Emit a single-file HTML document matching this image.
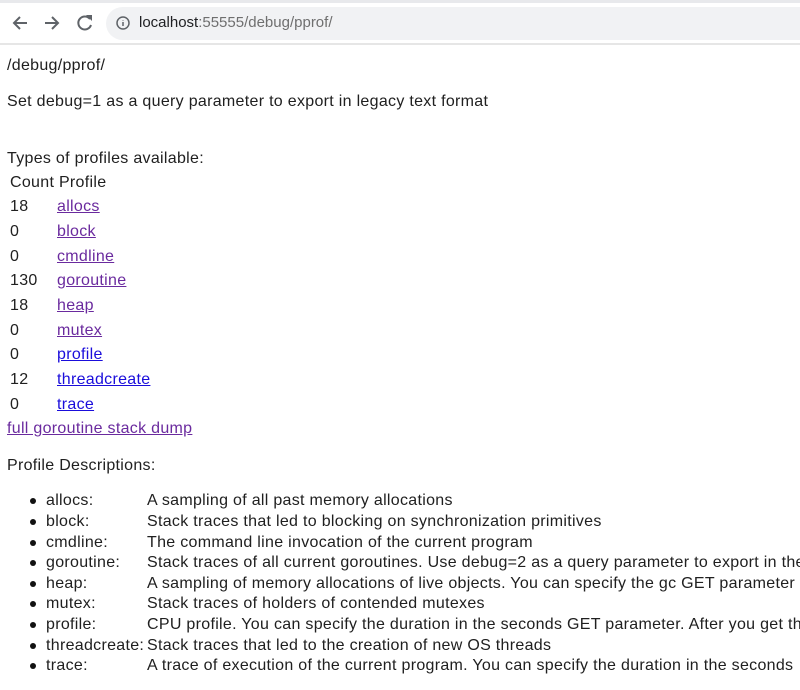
<!DOCTYPE html>
<html><head><meta charset="utf-8"><style>
html,body{margin:0;width:800px;height:690px;overflow:hidden}
body{background:#fff;font-family:"Liberation Sans",sans-serif;font-size:16px;letter-spacing:0.3px;color:#202020}
#w{position:relative;width:800px;height:690px;overflow:hidden}
.a{position:absolute;white-space:nowrap;line-height:20px;height:20px}
a{text-decoration:underline}
.v{color:#6a2a9e}.b{color:#1a0ddb}
.bul{position:absolute;left:30px;width:6px;height:6px;border-radius:50%;background:#111}
</style></head><body><div id="w">
<div style="position:absolute;left:0;top:0;width:800px;height:3px;background:#e8e9ec"></div>
<div style="position:absolute;left:106px;top:7px;width:720px;height:33px;border-radius:17px;background:#f1f2f4"></div>
<div style="position:absolute;left:0;top:43px;width:800px;height:2px;background:#e6e6e6"></div>
<svg style="position:absolute;left:0;top:0" width="110" height="45" viewBox="0 0 110 45">
<g fill="none" stroke="#5f6368" stroke-width="2">
<path d="M27 23H14M20 17l-6 6 6 6"/>
<path d="M45 23h13M52 17l6 6-6 6"/>
<path d="M90 19a6.5 6.5 0 1 0 1 6"/>
</g>
<path d="M86 15h6v6z" fill="#5f6368"/>
</svg>
<svg style="position:absolute;left:115px;top:15px" width="16" height="16" viewBox="0 0 16 16"><circle cx="8" cy="8" r="6" fill="none" stroke="#5f6368" stroke-width="1.5"/><path d="M8 7v4M8 5v.5" stroke="#5f6368" stroke-width="1.5"/></svg>
<div class="a" style="left:139px;top:13px;font-size:15px;letter-spacing:0;color:#202124">localhost<span style="color:#6f6f6f">:55555/debug/pprof/</span></div>
<div class="a" style="left:7px;top:56px">/debug/pprof/</div>
<div class="a" style="left:7px;top:92px">Set debug=1 as a query parameter to export in legacy text format</div>
<div class="a" style="left:7px;top:149px">Types of profiles available:</div>
<div class="a" style="left:10px;top:173px">Count Profile</div>
<div class="a" style="left:10px;top:197px">18</div><div class="a" style="left:57px;top:197px"><a class="v">allocs</a></div>
<div class="a" style="left:10px;top:222px">0</div><div class="a" style="left:57px;top:222px"><a class="v">block</a></div>
<div class="a" style="left:10px;top:247px">0</div><div class="a" style="left:57px;top:247px"><a class="v">cmdline</a></div>
<div class="a" style="left:10px;top:271px">130</div><div class="a" style="left:57px;top:271px"><a class="v">goroutine</a></div>
<div class="a" style="left:10px;top:296px">18</div><div class="a" style="left:57px;top:296px"><a class="v">heap</a></div>
<div class="a" style="left:10px;top:321px">0</div><div class="a" style="left:57px;top:321px"><a class="v">mutex</a></div>
<div class="a" style="left:10px;top:345px">0</div><div class="a" style="left:57px;top:345px"><a class="b">profile</a></div>
<div class="a" style="left:10px;top:370px">12</div><div class="a" style="left:57px;top:370px"><a class="b">threadcreate</a></div>
<div class="a" style="left:10px;top:395px">0</div><div class="a" style="left:57px;top:395px"><a class="b">trace</a></div>
<div class="a" style="left:7px;top:419px"><a class="v">full goroutine stack dump</a></div>
<div class="a" style="left:7px;top:456px">Profile Descriptions:</div>
<div class="bul" style="top:498px"></div><div class="a" style="left:46px;top:491px">allocs:</div><div class="a" style="left:147px;top:491px">A sampling of all past memory allocations</div>
<div class="bul" style="top:519px"></div><div class="a" style="left:46px;top:512px">block:</div><div class="a" style="left:147px;top:512px">Stack traces that led to blocking on synchronization primitives</div>
<div class="bul" style="top:540px"></div><div class="a" style="left:46px;top:533px">cmdline:</div><div class="a" style="left:147px;top:533px">The command line invocation of the current program</div>
<div class="bul" style="top:560px"></div><div class="a" style="left:46px;top:553px">goroutine:</div><div class="a" style="left:147px;top:553px">Stack traces of all current goroutines. Use debug=2 as a query parameter to export in the same</div>
<div class="bul" style="top:581px"></div><div class="a" style="left:46px;top:574px">heap:</div><div class="a" style="left:147px;top:574px">A sampling of memory allocations of live objects. You can specify the gc GET parameter to</div>
<div class="bul" style="top:601px"></div><div class="a" style="left:46px;top:594px">mutex:</div><div class="a" style="left:147px;top:594px">Stack traces of holders of contended mutexes</div>
<div class="bul" style="top:622px"></div><div class="a" style="left:46px;top:615px">profile:</div><div class="a" style="left:147px;top:615px">CPU profile. You can specify the duration in the seconds GET parameter. After you get the</div>
<div class="bul" style="top:643px"></div><div class="a" style="left:46px;top:636px">threadcreate:</div><div class="a" style="left:147px;top:636px">Stack traces that led to the creation of new OS threads</div>
<div class="bul" style="top:663px"></div><div class="a" style="left:46px;top:656px">trace:</div><div class="a" style="left:147px;top:656px">A trace of execution of the current program. You can specify the duration in the seconds</div>
</div></body></html>
